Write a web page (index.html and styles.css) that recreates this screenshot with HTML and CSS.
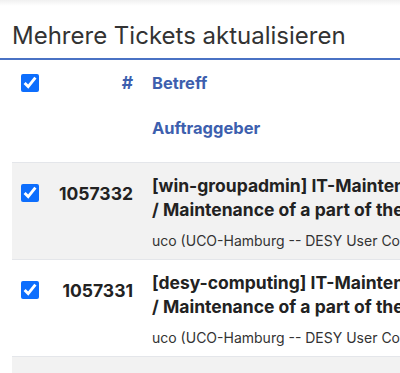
FILE: index.html
```html
<!DOCTYPE html>
<html lang="de">
<head>
<meta charset="UTF-8">
<meta name="viewport" content="width=device-width, initial-scale=1.0">
<link rel="stylesheet" href="styles.css">
</head>
<body>

<div class="top-shadow"></div>

<div class="page-header">
  <h2>Mehrere Tickets aktualisieren</h2>
</div>

<div class="content">
  <table class="ticket-table">
    <thead>
      <tr>
        <th class="col-check"><input type="checkbox" checked></th>
        <th class="col-number">#</th>
        <th class="col-subject">Betreff</th>
      </tr>
      <tr>
        <th></th>
        <th></th>
        <th class="col-subject sub-head">Auftraggeber</th>
      </tr>
    </thead>

    <!-- one tbody per ticket, subject row + requester row -->
    <tbody class="ticket odd">
      <tr>
        <td class="col-check"><input type="checkbox" checked></td>
        <td class="col-number">1057332</td>
        <td class="col-subject">[win-groupadmin] IT-Maintenance: Wartung eines Teils der IT-Infrastruktur<br>/ Maintenance of a part of the IT infrastructure</td>
      </tr>
      <tr>
        <td></td>
        <td></td>
        <td class="requester">uco (UCO-Hamburg -- DESY User Consulting Office)</td>
      </tr>
    </tbody>

    <tbody class="ticket even">
      <tr>
        <td class="col-check"><input type="checkbox" checked></td>
        <td class="col-number">1057331</td>
        <td class="col-subject">[desy-computing] IT-Maintenance: Wartung eines Teils der IT-Infrastruktur<br>/ Maintenance of a part of the IT infrastructure</td>
      </tr>
      <tr>
        <td></td>
        <td></td>
        <td class="requester">uco (UCO-Hamburg -- DESY User Consulting Office)</td>
      </tr>
    </tbody>

    <tbody class="ticket odd">
      <tr>
        <td class="spacer" colspan="3"></td>
      </tr>
    </tbody>
  </table>
</div>

</body>
</html>
```

FILE: styles.css
```css
body {
  font-family: Inter, "Noto Sans", sans-serif;
  margin: 0;
  padding: 0;
  background-color: #fff;
  color: #222;
  width: 400px;
  overflow: hidden;
}
.top-shadow {
  height: 6px;
  background: linear-gradient(#f0f0f0, #fff);
}
.page-header {
  border-bottom: 2px solid #4a72c4;
  padding: 14px 12px 7px 12px;
}
.page-header h2 {
  margin: 0;
  font-size: 24px;
  font-weight: 400;
  line-height: 31px;
  color: #333;
}
.content {
  padding-left: 12px;
}
.ticket-table {
  border-collapse: collapse;
  width: 820px;
}
.ticket-table th {
  color: #3d5fae;
  font-size: 16.5px;
  font-weight: 700;
  text-align: left;
  vertical-align: middle;
}
thead tr:first-child th {
  padding-top: 10px;
  padding-bottom: 10px;
}
thead .sub-head {
  padding-top: 16px;
  padding-bottom: 22px;
}
.ticket-table td {
  vertical-align: middle;
}
.col-check {
  width: 30px;
  padding-left: 9px;
}
.ticket-table .col-number {
  width: 80px;
  text-align: right;
  padding-right: 18px;
  font-size: 17.5px;
  font-weight: 700;
}
.ticket-table .col-subject {
  font-size: 17.5px;
  font-weight: 700;
  line-height: 24px;
  padding-top: 11px;
}
.ticket-table thead .col-subject {
  font-size: 16.5px;
}
.requester {
  font-size: 14px;
  color: #333;
  padding-top: 9px;
  padding-bottom: 10px;
}
.spacer {
  height: 40px;
}
.ticket {
  border-top: 1px solid #e4e6ea;
}
.ticket.odd {
  background-color: #f2f2f2;
}
.ticket.even {
  background-color: #fff;
}
input[type="checkbox"] {
  width: 18px;
  height: 18px;
  margin: 0;
  accent-color: #0d6efd;
  display: block;
}
```
